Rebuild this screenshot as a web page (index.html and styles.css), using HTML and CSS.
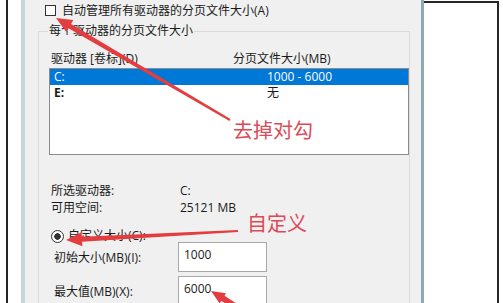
FILE: index.html
```html
<!DOCTYPE html>
<html lang="zh-CN">
<head>
    <meta charset="UTF-8">
    <title>虚拟内存</title>
    <link rel="stylesheet" href="styles.css">
</head>
<body>

    <div class="shot">
        <div class="edge-left"></div>

        <div class="dialog">
            <label class="auto-row">
                <span class="checkbox"></span>
                <span>自动管理所有驱动器的分页文件大小(A)</span>
            </label>

            <fieldset class="group">
                <legend>每个驱动器的分页文件大小</legend>

                <div class="list-head">
                    <span class="head-drive">驱动器 [卷标](D)</span>
                    <span>分页文件大小(MB)</span>
                </div>

                <div class="listbox">
                    <div class="list-row selected">
                        <span class="row-drive">C:</span>
                        <span>1000 - 6000</span>
                    </div>
                    <div class="list-row">
                        <span class="row-drive">E:</span>
                        <span>无</span>
                    </div>
                </div>

                <div class="info">
                    <div class="info-row"><span class="info-label">所选驱动器:</span><span>C:</span></div>
                    <div class="info-row"><span class="info-label">可用空间:</span><span>25121 MB</span></div>
                </div>

                <label class="radio-row">
                    <span class="radio"></span>
                    <span>自定义大小(C):</span>
                </label>

                <div class="size-row">
                    <span class="size-label">初始大小(MB)(I):</span>
                    <div class="size-input">1000</div>
                </div>
                <div class="size-row">
                    <span class="size-label">最大值(MB)(X):</span>
                    <div class="size-input">6000</div>
                </div>
            </fieldset>
        </div>

        <div class="side"></div>

        <!-- red annotations drawn over the screenshot -->
        <svg class="marks" width="503" height="303" viewBox="0 0 503 303">
            <polygon points="56,18 73.3,20 71.1,23.9 230.5,119.1 229.5,120.9 68.5,28.3 66.3,32.1" />
            <polygon points="66,240 81.6,232.2 81.9,236.7 237.9,230 238.1,232 82.1,241.7 82.4,246.2" />
            <polygon points="211,291 226,293.3 224.5,295.8 246.3,309.9 243.7,314.1 221.3,301 219.7,303.5" />
        </svg>
        <div class="note note-uncheck">去掉对勾</div>
        <div class="note note-custom">自定义</div>
    </div>

</body>
</html>
```

FILE: styles.css
```css
body {
    margin: 0;
    padding: 0;
    background-color: white;
    font-family: "Open Sans", "Noto Sans CJK SC", sans-serif;
    font-size: 12px;
    color: #1a1a1a;
}

.shot {
    position: relative;
    display: flex;
    width: 503px;
    height: 303px;
    overflow: hidden;
    background-color: white;
}

.edge-left {
    width: 6px;
    border-right: 2px solid #262626;
}

/* the grey windows dialog */
.dialog {
    width: 396px;
    margin-left: 13px;
    background-color: #f0f0f0;
    border-left: 4px solid #c4d6e2;
    border-right: 3px solid #8fa8b6;
}

.side {
    width: 73px;
    margin-top: 1px;
    border-top: 2px solid #262626;
    border-right: 2px solid #262626;
}

.auto-row {
    display: flex;
    align-items: center;
    gap: 6px;
    margin: 4px 0 0 20px;
    height: 13px;
    line-height: 13px;
}

.checkbox {
    width: 9px;
    height: 9px;
    background-color: white;
    border: 1px solid #333;
}

.group {
    margin: 7px 11px 0 13px;
    padding: 0 0 0 10px;
    border: 1px solid #dadada;
    height: 300px;
}

.group legend {
    margin-left: -1px;
    padding: 0 1px;
    line-height: 14px;
}

.list-head {
    display: flex;
    padding: 12px 0 0 2px;
    height: 17px;
    line-height: 17px;
}

.head-drive {
    width: 182px;
}

.listbox {
    margin-top: 1px;
    height: 85px;
    background-color: white;
    border: 1px solid #8c8c8c;
}

.list-row {
    display: flex;
    height: 16px;
    line-height: 16px;
    padding-left: 4px;
}

.list-row.selected {
    background-color: #0078d7;
    color: white;
}

.row-drive {
    width: 213px;
    font-weight: bold;
}

.list-row.selected .row-drive {
    font-weight: normal;
}

.info {
    padding: 27px 0 0 2px;
}

.info-row {
    display: flex;
    height: 17px;
    line-height: 17px;
}

.info-label {
    width: 129px;
}

.radio-row {
    display: flex;
    align-items: center;
    gap: 4px;
    margin: 13px 0 0 2px;
    height: 14px;
    line-height: 14px;
}

.radio {
    box-sizing: border-box;
    width: 13px;
    height: 13px;
    border: 1px solid #333;
    border-radius: 50%;
    background: radial-gradient(circle, #333 0 3px, white 3.5px);
}

.size-row {
    display: flex;
    align-items: center;
    margin-top: -1px;
    padding-left: 5px;
}

.size-row + .size-row {
    margin-top: 4px;
}

.size-label {
    width: 124px;
}

.size-input {
    box-sizing: border-box;
    width: 89px;
    height: 30px;
    padding: 5px 0 0 5px;
    line-height: 14px;
    background-color: white;
    border: 1px solid #a8a8a8;
}

/* annotations */
.marks {
    position: absolute;
    top: 0;
    left: 0;
}

.marks polygon {
    fill: #e43d3f;
}

.note {
    position: absolute;
    font-family: "Noto Sans CJK SC", sans-serif;
    font-size: 20px;
    line-height: 22px;
    color: #dc4a57;
}

.note-uncheck {
    left: 233px;
    top: 119px;
}

.note-custom {
    left: 247px;
    top: 212px;
}
```
